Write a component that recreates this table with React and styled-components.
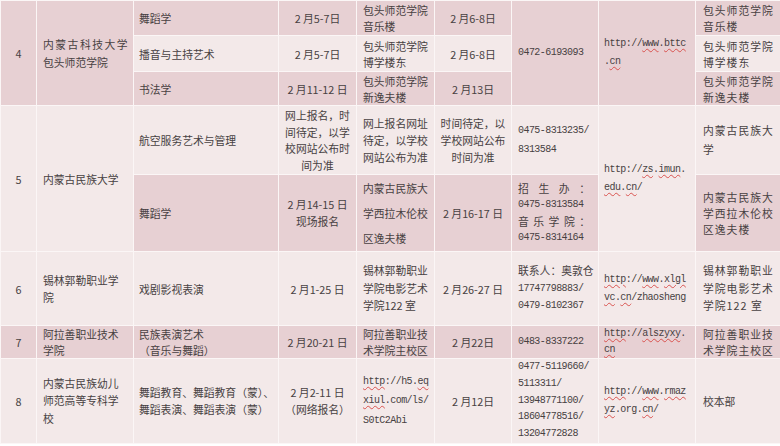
import React from "react";
import styled, { createGlobalStyle } from "styled-components";

const Global = createGlobalStyle`
  html, body { margin: 0; padding: 0; background: #ffffff; }
  body { font-family: "Noto Sans CJK SC", "Noto Sans", sans-serif; }
`;

const DARK = "#e7d0d3";
const LIGHT = "#f3e9e9";
const LINE = "#fbf6f6";

const MONO = `"Liberation Mono", "Noto Sans CJK SC", monospace`;

const Table = styled.table`
  width: 780px;
  border-collapse: collapse;
  table-layout: fixed;
  color: #474142;
  font-size: 10.8px;
`;

const Row = styled.tr`
  height: ${(p) => p.$h}px;
`;

const Cell = styled.td`
  background: ${(p) => (p.$dark ? DARK : LIGHT)};
  border: 1.5px solid ${LINE};
  padding: 0 ${(p) => p.$pr ?? 6}px 0 ${(p) => p.$pl ?? 6}px;
  text-align: ${(p) => p.$align || "left"};
  vertical-align: middle;
  line-height: ${(p) => p.$lh || 16}px;
  letter-spacing: ${(p) => (p.$mono ? -0.55 : p.$ls || 0)}px;
  font-family: ${(p) => (p.$mono ? MONO : "inherit")};
  font-size: ${(p) => (p.$mono ? "10px" : "inherit")};
  white-space: nowrap;
  overflow: hidden;
`;

const MonoLine = styled.span`
  display: block;
  font-family: ${MONO};
  font-size: 10px;
  letter-spacing: -0.55px;
`;

const Sq = styled.span`
  text-decoration: underline wavy #d9534f;
  text-decoration-thickness: 0.8px;
  text-underline-offset: 2px;
`;

const Spread = styled.span`
  display: block;
  text-align: justify;
  text-align-last: justify;
`;

const Wide = styled.span`
  letter-spacing: ${(p) => p.$ls}px;
`;

const widths = [36, 97, 145, 78, 78, 77, 87, 97, 85];

export default function App() {
  return (
    <>
      <Global />
      <Table>
        <colgroup>
          {widths.map((w, i) => (
            <col key={i} style={{ width: w }} />
          ))}
        </colgroup>
        <tbody>
          <Row $h={35}>
            <Cell $dark rowSpan={3} $align="center" $pl={0} $pr={0}>4</Cell>
            <Cell $dark rowSpan={3} $lh={18}>
              <Wide $ls={1.5}>内蒙古科技大学</Wide>
              <br />
              包头师范学院
            </Cell>
            <Cell $dark $pl={5}>舞蹈学</Cell>
            <Cell $dark $align="center">2 月5-7日</Cell>
            <Cell $dark $lh={16}>包头师范学院<br />音乐楼</Cell>
            <Cell $dark $align="center">2 月6-8日</Cell>
            <Cell $dark $mono rowSpan={3}>0472-6193093</Cell>
            <Cell $dark $mono rowSpan={3} $lh={18} $pl={5}>
              http://<Sq>www</Sq>.<Sq>bttc</Sq><br />.<Sq>cn</Sq>
            </Cell>
            <Cell $dark $ls={1} $pl={7} $pr={0}>包头师范学院<br />音乐楼</Cell>
          </Row>
          <Row $h={36}>
            <Cell $pl={5}>播音与主持艺术</Cell>
            <Cell $align="center">2 月5-7日</Cell>
            <Cell>包头师范学院<br />博学楼东</Cell>
            <Cell $align="center">2 月6-8日</Cell>
            <Cell $ls={1} $pl={7} $pr={0}>包头师范学院<br />博学楼东</Cell>
          </Row>
          <Row $h={34}>
            <Cell $dark $pl={5}>书法学</Cell>
            <Cell $dark $align="center">2 月11-12 日</Cell>
            <Cell $dark>包头师范学院<br />新逸夫楼</Cell>
            <Cell $dark $align="center">2 月13日</Cell>
            <Cell $dark $ls={1} $pl={7} $pr={0}>包头师范学院<br />新逸夫楼</Cell>
          </Row>

          <Row $h={69}>
            <Cell rowSpan={2} $align="center" $pl={0} $pr={0}>5</Cell>
            <Cell rowSpan={2}>内蒙古民族大学</Cell>
            <Cell $pl={5}>航空服务艺术与管理</Cell>
            <Cell $align="center" $lh={16.5} $pl={3} $pr={3}>
              网上报名，时<br />间待定，以学<br />校网站公布时<br />间为准
            </Cell>
            <Cell $lh={17}>网上报名网址<br />待定，以学校<br />网站公布为准</Cell>
            <Cell $align="center" $lh={17} $pl={3} $pr={3}>
              时间待定，以<br />学校网站公布<br />时间为准
            </Cell>
            <Cell $mono $lh={19}>0475-8313235/<br />8313584</Cell>
            <Cell $mono rowSpan={2} $lh={18} $pl={5}>
              http://<Sq>zs</Sq>.<Sq>imun</Sq>.<br /><Sq>edu</Sq>.<Sq>cn</Sq>/
            </Cell>
            <Cell $ls={1} $lh={19} $pl={7} $pr={0}>内蒙古民族大<br />学</Cell>
          </Row>
          <Row $h={77}>
            <Cell $dark $pl={5}>舞蹈学</Cell>
            <Cell $dark $align="center" $lh={17} $pl={3} $pr={3}>2 月14-15 日<br />现场报名</Cell>
            <Cell $dark $lh={25}>内蒙古民族大<br />学西拉木伦校<br />区逸夫楼</Cell>
            <Cell $dark $align="center" $pl={3} $pr={3}>2 月16-17 日</Cell>
            <Cell $dark $lh={16.5} $pr={8}>
              <Spread>招生办：</Spread>
              <MonoLine>0475-8313584</MonoLine>
              <Spread>音乐学院：</Spread>
              <MonoLine>0475-8314164</MonoLine>
            </Cell>
            <Cell $dark $ls={1} $lh={16} $pl={7} $pr={0}>
              内蒙古民族大<br />学西拉木伦校<br />区逸夫楼
            </Cell>
          </Row>

          <Row $h={74}>
            <Cell $align="center" $pl={0} $pr={0}>6</Cell>
            <Cell $lh={17}>锡林郭勒职业学<br />院</Cell>
            <Cell $pl={5}>戏剧影视表演</Cell>
            <Cell $align="center" $pl={3} $pr={3}>2 月1-25 日</Cell>
            <Cell $lh={17.5}>锡林郭勒职业<br />学院电影艺术<br />学院122 室</Cell>
            <Cell $align="center" $pl={3} $pr={3}>2 月26-27 日</Cell>
            <Cell $lh={17.5}>
              联系人：奥敦仓
              <MonoLine>17747798883/</MonoLine>
              <MonoLine>0479-8102367</MonoLine>
            </Cell>
            <Cell $mono $lh={18} $pl={5}>
              <Sq>http</Sq>://<Sq>www</Sq>.<Sq>xlgl</Sq><br /><Sq>vc</Sq>.<Sq>cn</Sq>/zhaosheng
            </Cell>
            <Cell $ls={1} $lh={17.5} $pl={7} $pr={0}>锡林郭勒职业<br />学院电影艺术<br />学院122 室</Cell>
          </Row>

          <Row $h={33}>
            <Cell $dark $align="center" $pl={0} $pr={0}>7</Cell>
            <Cell $dark $lh={16}>阿拉善职业技术<br />学院</Cell>
            <Cell $dark $lh={16} $pl={5}>民族表演艺术<br />（音乐与舞蹈）</Cell>
            <Cell $dark $align="center" $pl={3} $pr={3}>2 月20-21 日</Cell>
            <Cell $dark $lh={16}>阿拉善职业技<br />术学院主校区</Cell>
            <Cell $dark $align="center">2 月22日</Cell>
            <Cell $dark $mono>0483-8337222</Cell>
            <Cell $dark $mono $lh={16} $pl={5}>
              <Sq>http</Sq>://<Sq>alszyxy</Sq>.<br /><Sq>cn</Sq>
            </Cell>
            <Cell $dark $ls={1} $lh={16} $pl={7} $pr={0}>阿拉善职业技<br />术学院主校区</Cell>
          </Row>

          <Row $h={85}>
            <Cell $align="center" $pl={0} $pr={0}>8</Cell>
            <Cell $lh={17.5}>内蒙古民族幼儿<br />师范高等专科学<br />校</Cell>
            <Cell $lh={17} $pl={5} $pr={0}>
              舞蹈教育、舞蹈教育（蒙）、<br />舞蹈表演、舞蹈表演（蒙）
            </Cell>
            <Cell $align="center" $lh={17} $pl={2} $pr={2}>2 月2-11 日<br />（网络报名）</Cell>
            <Cell $mono $lh={19.5}>
              <Sq>http</Sq>://h5.<Sq>eq</Sq><br /><Sq>xiul</Sq>.com/ls/<br />S0tC2Abi
            </Cell>
            <Cell $align="center">2 月12日</Cell>
            <Cell $mono $lh={16.8}>
              0477-5119660/<br />5113311/<br />13948771100/<br />18604778516/<br />13204772828
            </Cell>
            <Cell $mono $lh={18} $pl={5}>
              <Sq>http</Sq>://<Sq>www</Sq>.<Sq>rmaz</Sq><br /><Sq>yz</Sq>.org.<Sq>cn</Sq>/
            </Cell>
            <Cell $pl={7}>校本部</Cell>
          </Row>
        </tbody>
      </Table>
    </>
  );
}
